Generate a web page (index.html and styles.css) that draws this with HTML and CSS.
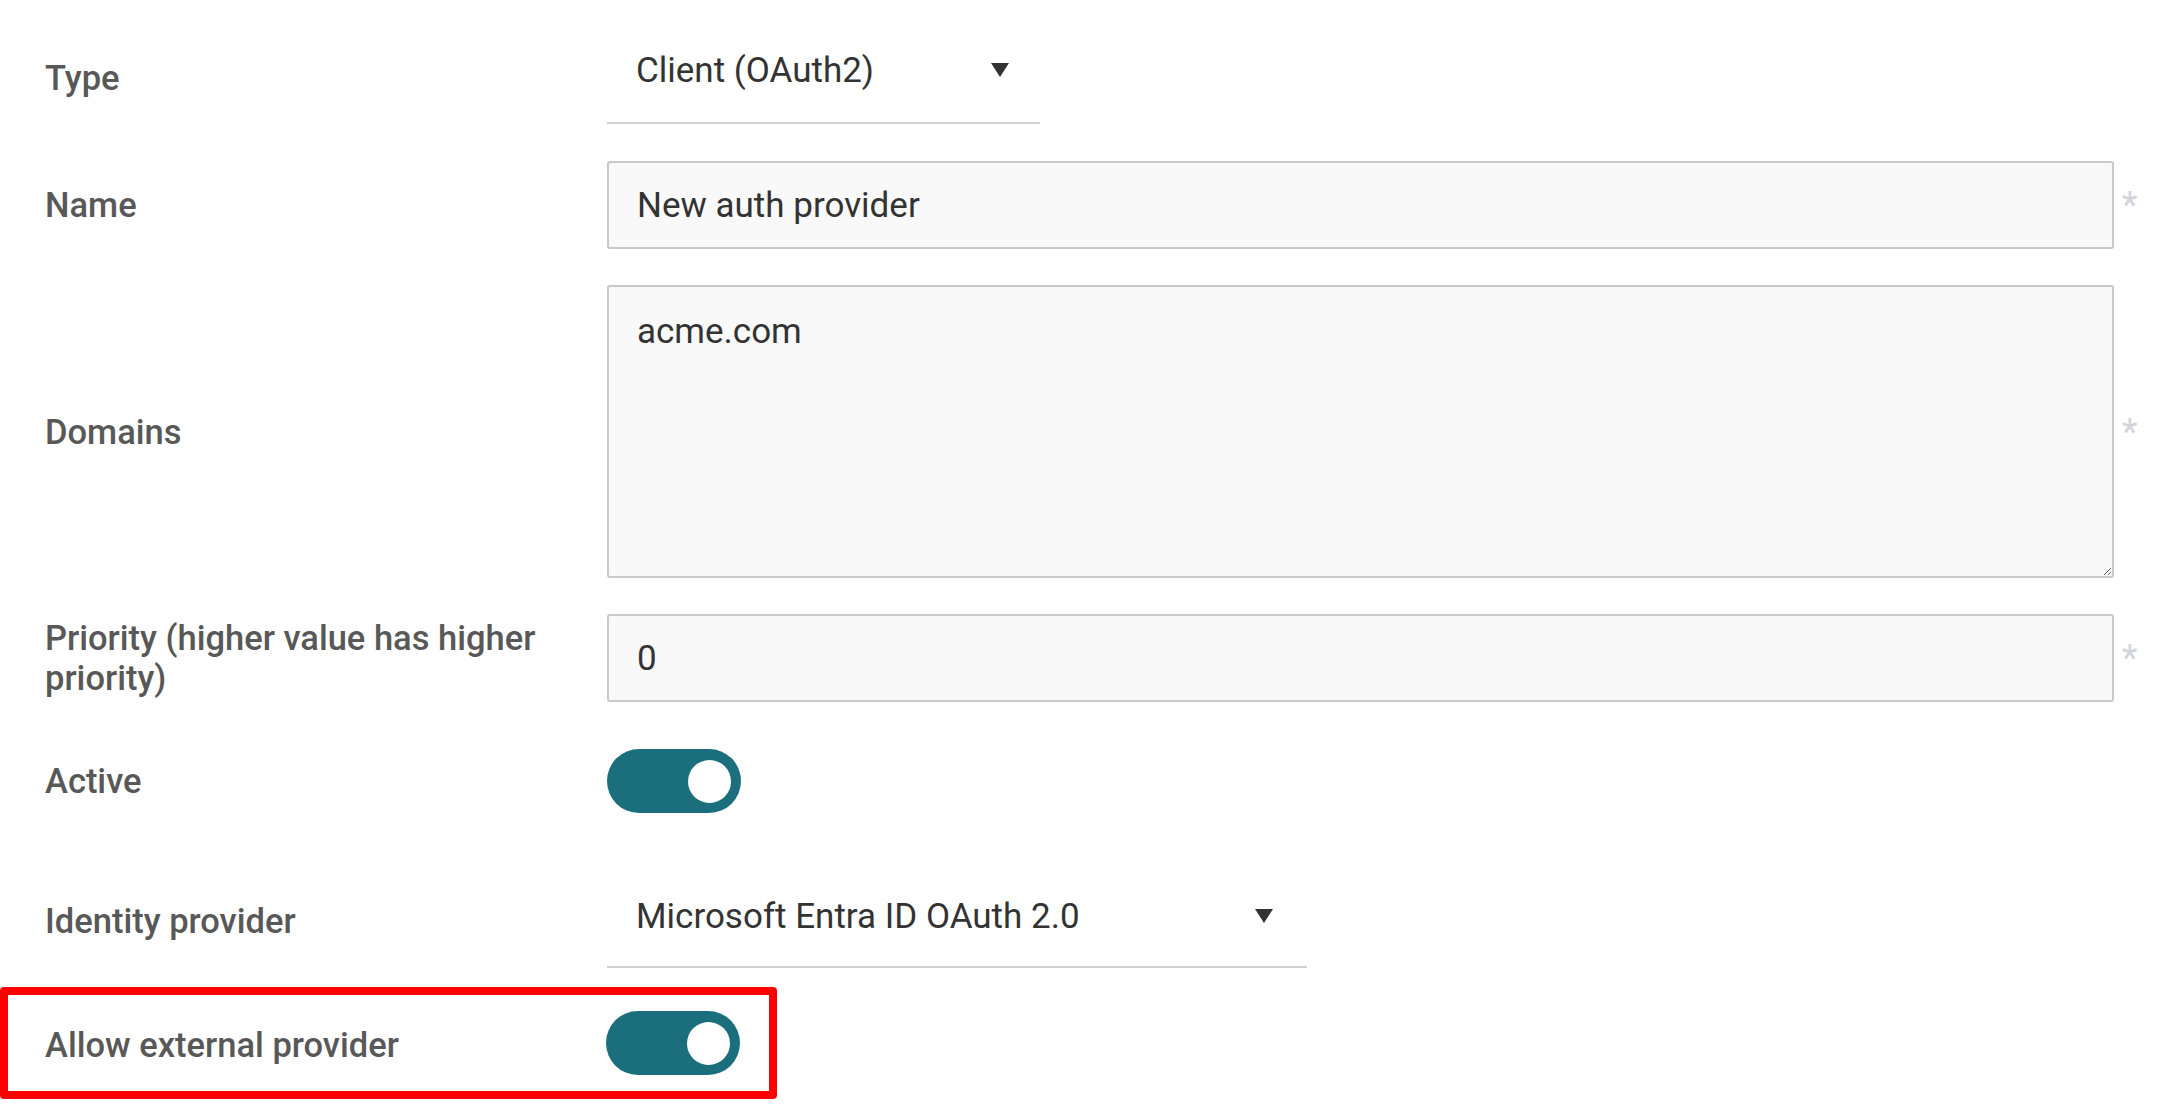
FILE: index.html
```html
<!DOCTYPE html>
<html lang="en">
<head>
<meta charset="utf-8">
<title>Auth provider</title>
<link rel="stylesheet" href="styles.css">
</head>
<body>
<form class="form">
  <div class="row row-type">
    <label class="label label-type">Type</label>
    <div class="select select-type">
      <span class="select-value">Client (OAuth2)</span>
      <svg class="caret" viewBox="0 0 20 16" width="20" height="16"><path d="M1 1 H19 L10 15 Z" fill="#333"/></svg>
    </div>
  </div>

  <div class="row row-name">
    <label class="label">Name</label>
    <input class="field" type="text" value="New auth provider">
    <span class="req">*</span>
  </div>

  <div class="row row-domains">
    <label class="label">Domains</label>
    <textarea class="field area">acme.com</textarea>
    <span class="req">*</span>
  </div>

  <div class="row row-priority">
    <label class="label">Priority (higher value has higher priority)</label>
    <input class="field" type="text" value="0">
    <span class="req">*</span>
  </div>

  <div class="row row-active">
    <label class="label">Active</label>
    <span class="toggle"><span class="knob"></span></span>
  </div>

  <div class="row row-idp">
    <label class="label label-idp">Identity provider</label>
    <div class="select select-idp">
      <span class="select-value">Microsoft Entra ID OAuth 2.0</span>
      <svg class="caret" viewBox="0 0 20 16" width="20" height="16"><path d="M1 1 H19 L10 15 Z" fill="#333"/></svg>
    </div>
  </div>

  <div class="row row-external">
    <label class="label label-external">Allow external provider</label>
    <span class="toggle"><span class="knob"></span></span>
  </div>
</form>
</body>
</html>
```

FILE: styles.css
```css
html, body {
  margin: 0;
  padding: 0;
  background: #ffffff;
}

body {
  width: 2157px;
  height: 1110px;
  overflow: hidden;
  font-family: Roboto, "Liberation Sans", Arial, sans-serif;
}

.form {
  display: flex;
  flex-direction: column;
}

.row {
  display: grid;
  grid-template-columns: 562px 1507px 43px;
  padding-left: 45px;
  align-items: center;
}

.label {
  font-size: 34.5px;
  line-height: 40px;
  font-weight: 500;
  color: #585858;
  padding-right: 50px;
}

.label-type {
  padding-top: 14px;
}

.label-idp {
  padding-top: 8px;
}

.label-external {
  padding-top: 4px;
}

/* custom select */
.select {
  box-sizing: border-box;
  display: flex;
  align-items: center;
  justify-content: space-between;
  border-bottom: 2px solid #d2d2d2;
  padding-left: 29px;
  font-size: 35px;
  color: #333333;
}

.select-type {
  width: 433px;
  height: 106px;
  padding-right: 30px;
}

.select-idp {
  width: 700px;
  height: 102px;
  padding-right: 33px;
}

.row-type {
  margin-top: 18px;
}

.caret {
  display: block;
}

/* text fields */
.field {
  box-sizing: border-box;
  width: 1507px;
  margin: 0;
  border: 2px solid #c9c9c9;
  border-radius: 3px;
  background: #f9f9f9;
  font-family: Roboto, "Liberation Sans", Arial, sans-serif;
  font-size: 35px;
  color: #333333;
  outline: none;
}

input.field {
  height: 88px;
  padding: 0 28px;
}

.area {
  height: 293px;
  padding: 20px 28px;
  line-height: 1.4;
  resize: vertical;
  display: block;
}

.row-name {
  margin-top: 37px;
}

.row-domains {
  margin-top: 36px;
}

.row-priority {
  margin-top: 36px;
}

.req {
  justify-self: start;
  margin-left: 8px;
  font-size: 36px;
  line-height: 40px;
  color: #d3d3db;
}

/* toggles */
.toggle {
  box-sizing: border-box;
  width: 134px;
  height: 64px;
  border-radius: 32px;
  background: #1b6f7d;
  display: flex;
  align-items: center;
  justify-content: flex-end;
  padding-right: 10px;
}

.knob {
  width: 43px;
  height: 43px;
  border-radius: 50%;
  background: #ffffff;
}

.row-active {
  margin-top: 47px;
}

.row-idp {
  margin-top: 53px;
}

/* highlighted row */
.row-external {
  box-sizing: border-box;
  width: 777px;
  height: 112px;
  margin-top: 19px;
  border: 8px solid #ff0000;
  border-radius: 4px;
  padding-left: 37px;
  grid-template-columns: 561px 134px;
}
```
